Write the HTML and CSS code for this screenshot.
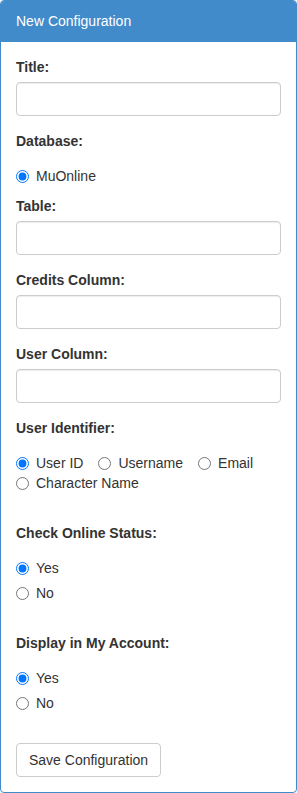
FILE: index.html
```html
<!DOCTYPE html>
<html lang="en">

<head>
    <meta charset="UTF-8">
    <meta name="viewport" content="width=device-width, initial-scale=1.0">
    <title>New Configuration</title>
    <link rel="stylesheet" href="styles.css">
</head>

<body>
    <div class="panel">
        <div class="panel-heading">New Configuration</div>
        <div class="panel-body">
            <form>
                <div class="form-group">
                    <label class="control-label">Title:</label>
                    <input type="text" class="form-control" name="title">
                </div>

                <div class="form-group group-radio">
                    <label class="control-label">Database:</label>
                    <div class="radio">
                        <label><input type="radio" name="database" checked> MuOnline</label>
                    </div>
                </div>

                <div class="form-group">
                    <label class="control-label">Table:</label>
                    <input type="text" class="form-control" name="table">
                </div>

                <div class="form-group">
                    <label class="control-label">Credits Column:</label>
                    <input type="text" class="form-control" name="credits_column">
                </div>

                <div class="form-group">
                    <label class="control-label">User Column:</label>
                    <input type="text" class="form-control" name="user_column">
                </div>

                <div class="form-group group-options">
                    <label class="control-label">User Identifier:</label>
                    <div class="radio-inline-row">
                        <label class="radio-inline"><input type="radio" name="user_id" checked> User ID</label>
                        <label class="radio-inline"><input type="radio" name="user_id"> Username</label>
                        <label class="radio-inline"><input type="radio" name="user_id"> Email</label>
                        <label class="radio-inline"><input type="radio" name="user_id"> Character Name</label>
                    </div>
                </div>

                <div class="form-group group-options">
                    <label class="control-label">Check Online Status:</label>
                    <div class="radio">
                        <label><input type="radio" name="check_online" checked> Yes</label>
                    </div>
                    <div class="radio">
                        <label><input type="radio" name="check_online"> No</label>
                    </div>
                </div>

                <div class="form-group group-options">
                    <label class="control-label">Display in My Account:</label>
                    <div class="radio">
                        <label><input type="radio" name="display" checked> Yes</label>
                    </div>
                    <div class="radio">
                        <label><input type="radio" name="display"> No</label>
                    </div>
                </div>

                <button type="submit" class="btn">Save Configuration</button>
            </form>
        </div>
    </div>
</body>

</html>
```

FILE: styles.css
```css
:root {
    --primary: #428bca;
    --text: #333;
    --border: #ccc;
}

html,
body {
    margin: 0;
    padding: 0;
}

body {
    font-family: "Liberation Sans", Arial, Helvetica, sans-serif;
    font-size: 14px;
    line-height: 20px;
    color: var(--text);
    background-color: #fff;
}

.panel {
    border: 1px solid var(--primary);
    border-radius: 4px;
    background-color: #fff;
    overflow: hidden;
}

.panel-heading {
    background-color: var(--primary);
    color: #fff;
    padding: 10px 15px;
    border-bottom: 1px solid var(--primary);
}

.panel-body {
    padding: 15px;
}

.form-group {
    display: flex;
    flex-direction: column;
    margin-bottom: 15px;
}

.group-radio {
    margin-bottom: 0;
}

.group-options {
    margin-bottom: 20px;
}

.control-label {
    display: block;
    font-weight: bold;
    margin-bottom: 5px;
}

.form-control {
    display: block;
    width: 100%;
    height: 34px;
    box-sizing: border-box;
    padding: 6px 12px;
    font: inherit;
    color: #555;
    border: 1px solid var(--border);
    border-radius: 4px;
    box-shadow: inset 0 1px 1px rgba(0, 0, 0, 0.075);
}

.radio {
    margin-top: 10px;
    margin-bottom: 10px;
}

.radio + .radio {
    margin-top: -5px;
}

.radio label,
.radio-inline {
    display: flex;
    align-items: center;
    gap: 7px;
    height: 20px;
    cursor: pointer;
}

.radio input,
.radio-inline input {
    width: 13px;
    height: 13px;
    margin: 0;
}

.radio-inline-row {
    display: flex;
    flex-wrap: wrap;
    column-gap: 15px;
    margin-top: 10px;
    margin-bottom: 10px;
}

.btn {
    display: block;
    height: 34px;
    padding: 6px 12px;
    font: inherit;
    color: var(--text);
    background-color: #fff;
    border: 1px solid var(--border);
    border-radius: 4px;
    cursor: pointer;
}

.btn:hover {
    background-color: #e6e6e6;
}
```
